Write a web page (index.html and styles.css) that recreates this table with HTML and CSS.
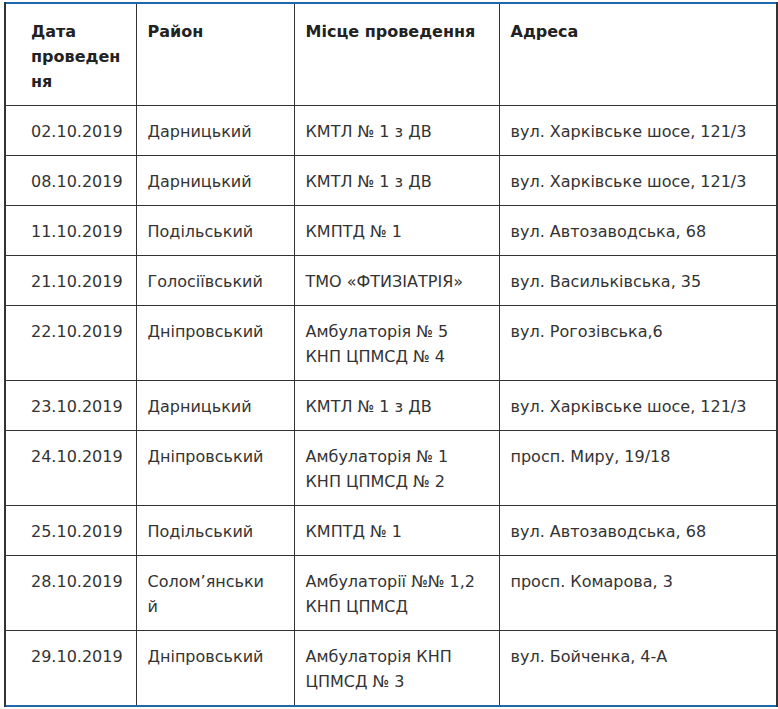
FILE: index.html
```html
<!DOCTYPE html>
<html lang="uk">
<head>
<meta charset="utf-8">
<link rel="stylesheet" href="styles.css">
</head>
<body>
<div class="wrap">
<table class="schedule">
<colgroup>
<col class="c1"><col class="c2"><col class="c3"><col class="c4">
</colgroup>
<thead>
<tr><th>Дата проведен<br>ня</th><th>Район</th><th>Місце проведення</th><th>Адреса</th></tr>
</thead>
<tbody>
<tr><td>02.10.2019</td><td>Дарницький</td><td>КМТЛ № 1 з ДВ</td><td>вул. Харківське шосе, 121/3</td></tr>
<tr><td>08.10.2019</td><td>Дарницький</td><td>КМТЛ № 1 з ДВ</td><td>вул. Харківське шосе, 121/3</td></tr>
<tr><td>11.10.2019</td><td>Подільський</td><td>КМПТД № 1</td><td>вул. Автозаводська, 68</td></tr>
<tr><td>21.10.2019</td><td>Голосіївський</td><td>ТМО «ФТИЗІАТРІЯ»</td><td>вул. Васильківська, 35</td></tr>
<tr><td>22.10.2019</td><td>Дніпровський</td><td>Амбулаторія № 5<br>КНП ЦПМСД № 4</td><td>вул. Рогозівська,6</td></tr>
<tr><td>23.10.2019</td><td>Дарницький</td><td>КМТЛ № 1 з ДВ</td><td>вул. Харківське шосе, 121/3</td></tr>
<tr><td>24.10.2019</td><td>Дніпровський</td><td>Амбулаторія № 1<br>КНП ЦПМСД № 2</td><td>просп. Миру, 19/18</td></tr>
<tr><td>25.10.2019</td><td>Подільський</td><td>КМПТД № 1</td><td>вул. Автозаводська, 68</td></tr>
<tr><td>28.10.2019</td><td>Солом’янськи<br>й</td><td>Амбулаторії №№ 1,2<br>КНП ЦПМСД</td><td>просп. Комарова, 3</td></tr>
<tr><td>29.10.2019</td><td>Дніпровський</td><td>Амбулаторія КНП<br>ЦПМСД № 3</td><td>вул. Бойченка, 4-А</td></tr>
</tbody>
</table>
</div>
</body>
</html>
```
FILE: styles.css
```css
html, body {
  margin: 0;
  padding: 0;
  background: #fff;
}
.wrap {
  padding: 2px 2px 0 4px;
}
.schedule {
  width: 772px;
  border-collapse: collapse;
  table-layout: fixed;
  font-family: "DejaVu Sans", "Open Sans", sans-serif;
  font-size: 16px;
  line-height: 25px;
  color: #333;
  border-top: 2px solid #1f67ad;
  border-bottom: 2px solid #1f67ad;
}
.c1 { width: 131px; }
.c2 { width: 158px; }
.c3 { width: 205px; }
.c4 { width: 278px; }
.schedule th,
.schedule td {
  border-left: 1px solid #333;
  border-right: 1px solid #333;
  border-bottom: 1px solid #333;
  padding: 13px 6px 11px 11px;
  text-align: left;
  vertical-align: top;
  white-space: nowrap;
}
.schedule th {
  font-weight: 700;
  padding-top: 15px;
  padding-bottom: 11px;
  color: #222;
  white-space: normal;
}
.schedule th:first-child,
.schedule td:first-child {
  padding-left: 25px;
  border-left-width: 2px;
}
.schedule th:last-child,
.schedule td:last-child {
  border-right-width: 2px;
}
.schedule tbody tr:last-child td {
  border-bottom: none;
}
```
